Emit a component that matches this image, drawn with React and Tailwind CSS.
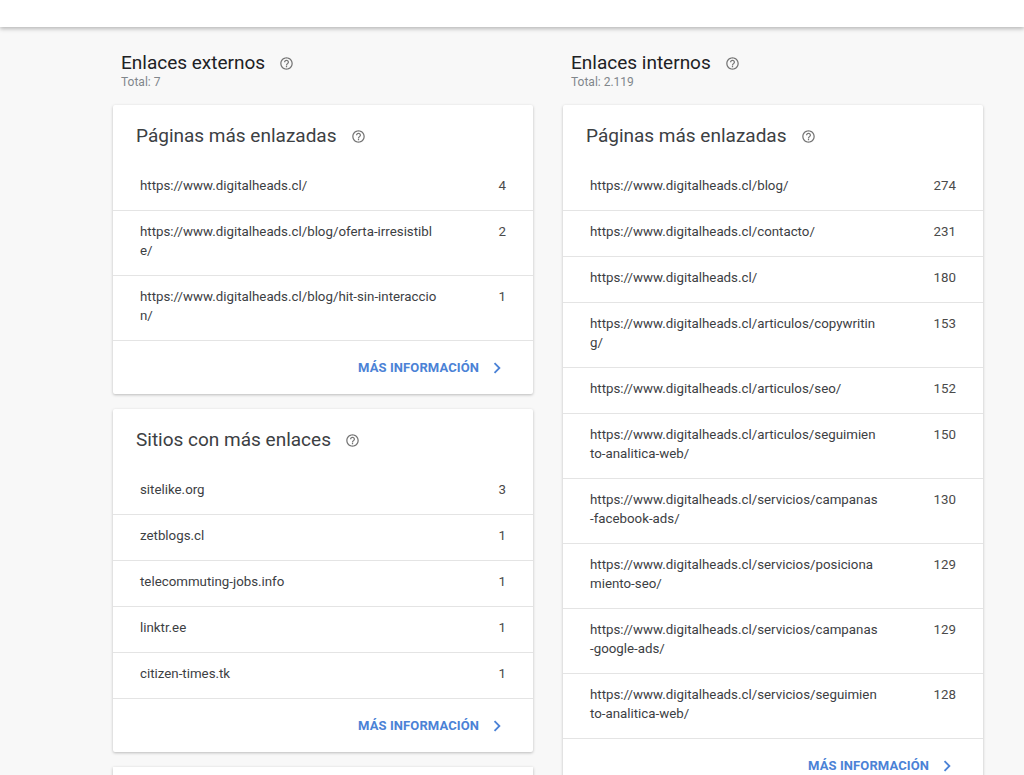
import React from "react";

// long urls are split where the reference wraps them
const externalPages = [
  { url: ["https://www.digitalheads.cl/"], count: 4 },
  { url: ["https://www.digitalheads.cl/blog/oferta-irresistibl", "e/"], count: 2 },
  { url: ["https://www.digitalheads.cl/blog/hit-sin-interaccio", "n/"], count: 1 },
];

const externalSites = [
  { url: ["sitelike.org"], count: 3 },
  { url: ["zetblogs.cl"], count: 1 },
  { url: ["telecommuting-jobs.info"], count: 1 },
  { url: ["linktr.ee"], count: 1 },
  { url: ["citizen-times.tk"], count: 1 },
];

const internalPages = [
  { url: ["https://www.digitalheads.cl/blog/"], count: 274 },
  { url: ["https://www.digitalheads.cl/contacto/"], count: 231 },
  { url: ["https://www.digitalheads.cl/"], count: 180 },
  { url: ["https://www.digitalheads.cl/articulos/copywritin", "g/"], count: 153 },
  { url: ["https://www.digitalheads.cl/articulos/seo/"], count: 152 },
  { url: ["https://www.digitalheads.cl/articulos/seguimien", "to-analitica-web/"], count: 150 },
  { url: ["https://www.digitalheads.cl/servicios/campanas", "-facebook-ads/"], count: 130 },
  { url: ["https://www.digitalheads.cl/servicios/posiciona", "miento-seo/"], count: 129 },
  { url: ["https://www.digitalheads.cl/servicios/campanas", "-google-ads/"], count: 129 },
  { url: ["https://www.digitalheads.cl/servicios/seguimien", "to-analitica-web/"], count: 128 },
];

function HelpIcon({ size = 15 }) {
  return (
    <svg width={size} height={size} viewBox="0 0 24 24" fill="#757575">
      <path d="M11 18h2v-2h-2v2zm1-16C6.48 2 2 6.48 2 12s4.48 10 10 10 10-4.48 10-10S17.52 2 12 2zm0 18c-4.41 0-8-3.59-8-8s3.59-8 8-8 8 3.59 8 8-3.59 8-8 8zm0-14c-2.21 0-4 1.790-4 4h2c0-1.1.9-2 2-2s2 .9 2 2c0 2-3 1.75-3 5h2c0-2.25 3-2.5 3-5 0-2.21-1.79-4-4-4z" />
    </svg>
  );
}

function Chevron() {
  return (
    <svg width="22" height="22" viewBox="0 0 24 24" fill="#4b82d6">
      <path d="M10 6L8.59 7.41 13.17 12l-4.58 4.59L10 18l6-6z" />
    </svg>
  );
}

function SectionHead({ title, total }) {
  return (
    <div className="pl-2 h-[54px] pt-[1px]">
      <div className="flex items-center gap-[14px] h-[22px]">
        <span className="text-[19px] text-[#202124] leading-[22px]">{title}</span>
        <HelpIcon size={15} />
      </div>
      <div className="text-[12px] text-[#80868b] leading-[16px]">{total}</div>
    </div>
  );
}

function LinkCard({ title, rows }) {
  return (
    <div className="bg-white rounded-[2px] shadow-[0_1px_3px_rgba(0,0,0,0.25)] mb-[15px]">
      <div className="flex items-center gap-[14px] pl-[23px] h-[60px] pt-[2px]">
        <span className="text-[19px] text-[#3c4043] leading-[24px]">{title}</span>
        <HelpIcon size={15} />
      </div>
      {rows.map((r, i) => (
        <div
          key={i}
          className={
            "flex justify-between px-[27px] pt-[11px] pb-[15px] text-[13.3px] leading-[19px] text-[#3c4043]" +
            (i < rows.length - 1 ? " border-b border-[#e4e4e4]" : "")
          }
        >
          <span className="whitespace-nowrap">
            {r.url.map((line, j) => (
              <div key={j}>{line}</div>
            ))}
          </span>
          <span className="text-right text-[#4a4a4a]">{r.count}</span>
        </div>
      ))}
      <div className="border-t border-[#e4e4e4] h-[54px] flex items-center justify-end pr-[25px] gap-[7px]">
        <span className="text-[13px] font-bold text-[#4b82d6] tracking-[0.1px]">MÁS INFORMACIÓN</span>
        <Chevron />
      </div>
    </div>
  );
}

export default function App() {
  return (
    <div className="h-[775px] bg-[#f8f8f8] overflow-hidden" style={{ fontFamily: "Roboto, 'Liberation Sans', sans-serif" }}>
      <div className="h-[27px] bg-white shadow-[0_2px_4px_rgba(0,0,0,0.25)]" />
      <div className="flex gap-[30px] pl-[113px] pt-[24px]">
        <div className="w-[420px]">
          <SectionHead title="Enlaces externos" total="Total: 7" />
          <LinkCard title="Páginas más enlazadas" rows={externalPages} />
          <LinkCard title="Sitios con más enlaces" rows={externalSites} />
          <div className="bg-white h-[40px] shadow-[0_1px_3px_rgba(0,0,0,0.25)]" />
        </div>
        <div className="w-[420px]">
          <SectionHead title="Enlaces internos" total="Total: 2.119" />
          <LinkCard title="Páginas más enlazadas" rows={internalPages} />
        </div>
      </div>
    </div>
  );
}
